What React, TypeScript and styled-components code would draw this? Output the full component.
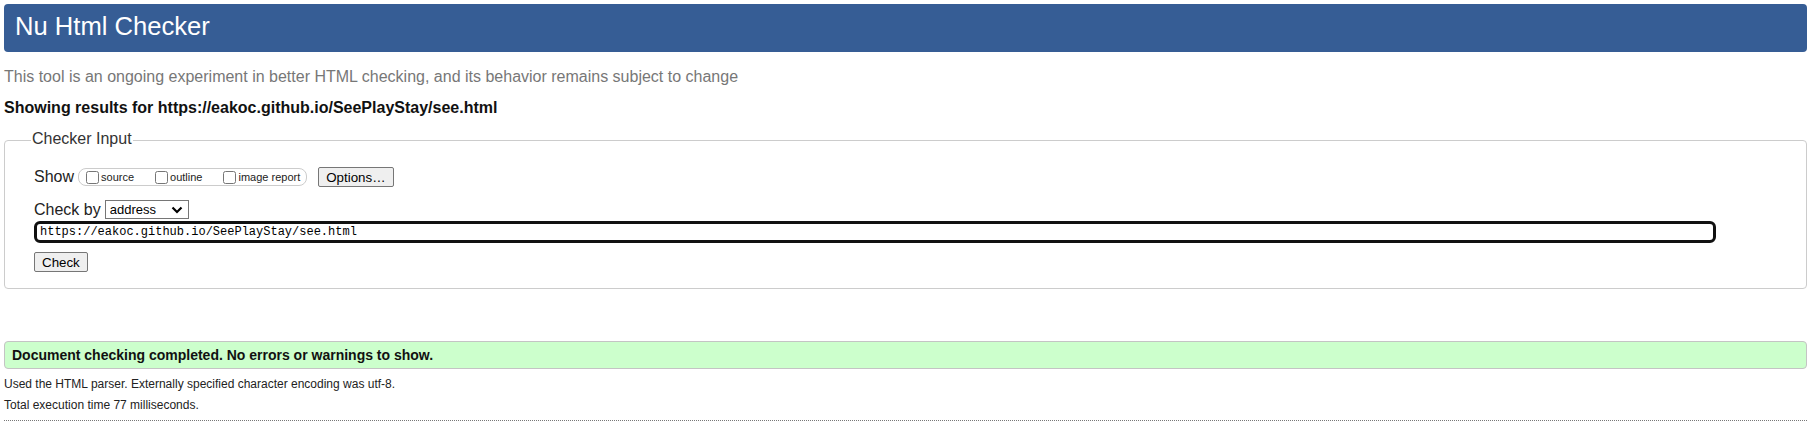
import { createGlobalStyle, styled } from "styled-components";

const GlobalStyle = createGlobalStyle`
  html, body {
    margin: 0;
    padding: 0;
    background: #fff;
  }
  body {
    font-family: "Liberation Sans", Arial, sans-serif;
    color: #222;
  }
`;

const Page = styled.div`
  padding: 4px 10px 0 4px;
`;

const Header = styled.header`
  background-color: #365d95;
  border-radius: 4px;
  height: 48px;
  padding-left: 11px;
  box-sizing: border-box;
`;

const Title = styled.h1`
  margin: 0;
  padding-bottom: 3px;
  line-height: 45px;
  font-size: 25.6px;
  font-weight: normal;
  color: #fff;
`;

const Intro = styled.p`
  margin: 15px 0 0;
  font-size: 16px;
  line-height: 20px;
  color: #777;
`;

const Results = styled.p`
  margin: 11px 0 0;
  font-size: 16px;
  line-height: 20px;
  font-weight: bold;
  color: #111;
`;

const Fieldset = styled.fieldset`
  margin: 12px 0 0;
  padding: 16px 0 16px 29px;
  border: 1px solid #ccc;
  border-radius: 4px;
  min-width: 0;
`;

const Legend = styled.legend`
  margin-left: -3px;
  padding: 0 1px 3px;
  font-size: 16px;
  line-height: 18px;
  color: #333;
`;

const Row = styled.div<{ $top?: number; $height: number }>`
  display: flex;
  align-items: center;
  margin-top: ${(p) => p.$top ?? 0}px;
  height: ${(p) => p.$height}px;
  font-size: 16px;
`;

const RowLabel = styled.span`
  margin-right: 4px;
`;

const ShowGroup = styled.span`
  display: inline-flex;
  align-items: center;
  height: 18px;
  box-sizing: border-box;
  padding: 0 6px 0 7px;
  border: 1px solid #ccc;
  border-radius: 8px;
  margin-right: 11px;
`;

const CheckLabel = styled.label<{ $last?: boolean }>`
  display: inline-flex;
  align-items: center;
  font-size: 11px;
  margin-right: ${(p) => (p.$last ? 0 : 21)}px;
`;

const Checkbox = styled.input`
  width: 13px;
  height: 13px;
  margin: 0 2px 0 0;
`;

const Button = styled.button`
  height: 20px;
  box-sizing: border-box;
  padding: 0 7px;
  font-family: "Liberation Sans", Arial, sans-serif;
  font-size: 13.33px;
  color: #000;
  background: #efefef;
  border: 1px solid #767676;
  border-radius: 2px;
`;

const SelectWrap = styled.span`
  position: relative;
  display: inline-block;
  width: 84px;
  height: 19px;
`;

const Select = styled.select`
  appearance: none;
  width: 100%;
  height: 100%;
  box-sizing: border-box;
  margin: 0;
  padding: 0 0 0 4px;
  border: 1px solid #767676;
  border-radius: 0;
  background: #fff;
  font-family: "Liberation Sans", Arial, sans-serif;
  font-size: 13px;
  color: #000;
`;

const Chevron = styled.svg`
  position: absolute;
  right: 6px;
  top: 6px;
  pointer-events: none;
`;

const UrlInput = styled.input`
  display: block;
  width: 1682px;
  height: 22px;
  box-sizing: border-box;
  margin: 0;
  padding: 0 3px;
  border: 3px solid #111;
  border-radius: 6px;
  outline: none;
  font-family: "Liberation Mono", "DejaVu Sans Mono", monospace;
  font-size: 12px;
  color: #000;
`;

const Success = styled.div`
  margin-top: 52px;
  padding: 1px 7px 0;
  line-height: 25px;
  font-size: 14px;
  font-weight: bold;
  color: #111;
  background: #ccffcc;
  border: 1px solid #c4c4c4;
  border-radius: 4px;
`;

const Notes = styled.div`
  margin-top: 5px;
  font-size: 12px;
  line-height: 21px;
  color: #222;
`;

const Divider = styled.hr`
  margin: 4px 0 0;
  border: none;
  border-top: 1px dotted #777;
`;

export default function App() {
  return (
    <>
      <GlobalStyle />
      <Page>
        <Header>
          <Title>Nu Html Checker</Title>
        </Header>
        <Intro>
          This tool is an ongoing experiment in better HTML checking, and its
          behavior remains subject to change
        </Intro>
        <Results>
          Showing results for https://eakoc.github.io/SeePlayStay/see.html
        </Results>
        <Fieldset>
          <Legend>Checker Input</Legend>
          <Row $height={20}>
            <RowLabel>Show</RowLabel>
            <ShowGroup>
              <CheckLabel>
                <Checkbox type="checkbox" />
                source
              </CheckLabel>
              <CheckLabel>
                <Checkbox type="checkbox" />
                outline
              </CheckLabel>
              <CheckLabel $last>
                <Checkbox type="checkbox" />
                image report
              </CheckLabel>
            </ShowGroup>
            <Button type="button">Options…</Button>
          </Row>
          <Row $top={13} $height={19}>
            <RowLabel>Check by</RowLabel>
            <SelectWrap>
              <Select defaultValue="address">
                <option value="address">address</option>
                <option value="file">file upload</option>
                <option value="text">text input</option>
              </Select>
              <Chevron width="12" height="8" viewBox="0 0 12 8">
                <path
                  d="M1.5 1.5 L6 6 L10.5 1.5"
                  fill="none"
                  stroke="#000"
                  strokeWidth="2.2"
                />
              </Chevron>
            </SelectWrap>
          </Row>
          <Row $top={2} $height={22}>
            <UrlInput
              type="url"
              defaultValue="https://eakoc.github.io/SeePlayStay/see.html"
            />
          </Row>
          <Row $top={9} $height={20}>
            <Button type="submit">Check</Button>
          </Row>
        </Fieldset>
        <Success>
          Document checking completed. No errors or warnings to show.
        </Success>
        <Notes>
          <div>
            Used the HTML parser. Externally specified character encoding was
            utf-8.
          </div>
          <div>Total execution time 77 milliseconds.</div>
        </Notes>
        <Divider />
      </Page>
    </>
  );
}
